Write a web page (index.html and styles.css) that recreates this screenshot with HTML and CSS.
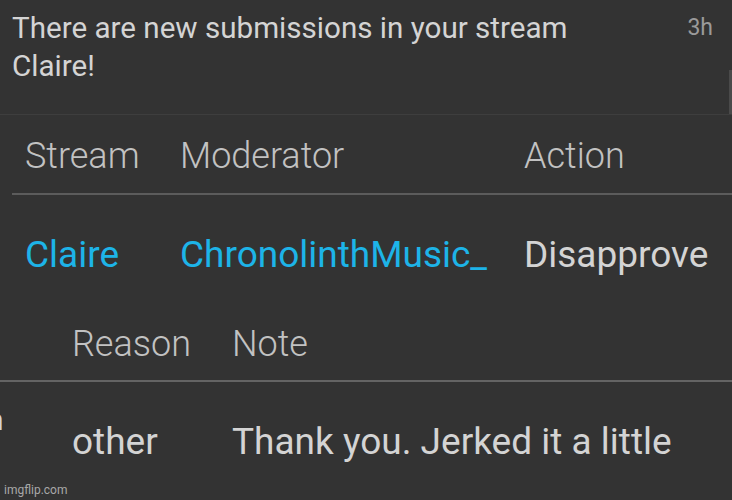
FILE: index.html
```html
<!DOCTYPE html>
<html>
<head>
<meta charset="utf-8">
<link rel="stylesheet" href="styles.css">
</head>
<body>
<div class="page">
  <div class="notif">
    <div class="msg">There are new submissions in your stream<br>Claire!</div>
    <div class="time">3h</div>
    <div class="scroll"></div>
  </div>
  <div class="table1">
    <div class="row head">
      <div class="c1">Stream</div>
      <div class="c2">Moderator</div>
      <div class="c3">Action</div>
    </div>
    <div class="row data">
      <div class="c1 link">Claire</div>
      <div class="c2 link">ChronolinthMusic_</div>
      <div class="c3">Disapprove</div>
    </div>
  </div>
  <div class="table2">
    <div class="row2 head">
      <div class="d0"></div>
      <div class="d1">Reason</div>
      <div class="d2">Note</div>
    </div>
    <div class="row2 data">
      <div class="d0"><span class="cut">n</span></div>
      <div class="d1">other</div>
      <div class="d2">Thank you. Jerked it a little</div>
    </div>
  </div>
  <div class="wm">imgflip.com</div>
</div>
</body>
</html>
```

FILE: styles.css
```css
html, body {
  margin: 0;
  padding: 0;
  background: #333333;
  overflow: hidden;
}
body {
  width: 732px;
  height: 500px;
  font-family: Roboto, "Noto Sans", sans-serif;
  color: #d9d9d9;
}
.page {
  position: relative;
  width: 732px;
  height: 500px;
  overflow: hidden;
}
.notif {
  position: relative;
  display: flex;
  justify-content: space-between;
  height: 114px;
  padding: 0 19px 0 12px;
  border-bottom: 1px solid #3e3e3e;
  box-sizing: content-box;
}
.msg {
  padding-top: 9px;
  font-size: 29.6px;
  line-height: 38px;
  color: #d4d4d4;
}
.time {
  padding-top: 13px;
  font-size: 23px;
  line-height: 30px;
  color: #9a9a9a;
}
.scroll {
  position: absolute;
  right: 0;
  top: 70px;
  width: 3px;
  height: 44px;
  background: #4a4a4a;
}
.table1 {
  padding-left: 12px;
}
.row {
  display: flex;
  font-size: 36px;
  line-height: 44px;
}
.row .c1 { width: 155px; padding-left: 13px; }
.row .c2 { width: 344px; }
.row .c3 { flex: 1; }
.head {
  font-weight: 300;
  color: #c2c2c2;
}
.table1 .head {
  padding: 19px 0 15px;
  border-bottom: 2px solid #5c5c5c;
}
.data {
  font-size: 37px;
  color: #d4d4d4;
}
.table1 .data {
  padding-top: 38px;
}
.link { color: #1db4e8; }
.table2 .head {
  padding: 45px 0 14px;
  border-bottom: 2px solid #646464;
}
.row2 {
  display: flex;
  align-items: flex-start;
  font-size: 36px;
  line-height: 44px;
}
.row2.data { font-size: 37px; }
.row2 .d0 { width: 72px; position: relative; }
.row2 .d1 { width: 160px; }
.row2 .d2 { flex: 1; }
.table2 .data {
  padding-top: 38px;
}
.cut {
  display: block;
  margin-left: -13px;
  margin-top: -22px;
  font-size: 30px;
  color: #d4d4d4;
}
.wm {
  position: absolute;
  left: 4px;
  bottom: 3px;
  font-size: 12px;
  line-height: 14px;
  color: #a8a8a8;
}
```
